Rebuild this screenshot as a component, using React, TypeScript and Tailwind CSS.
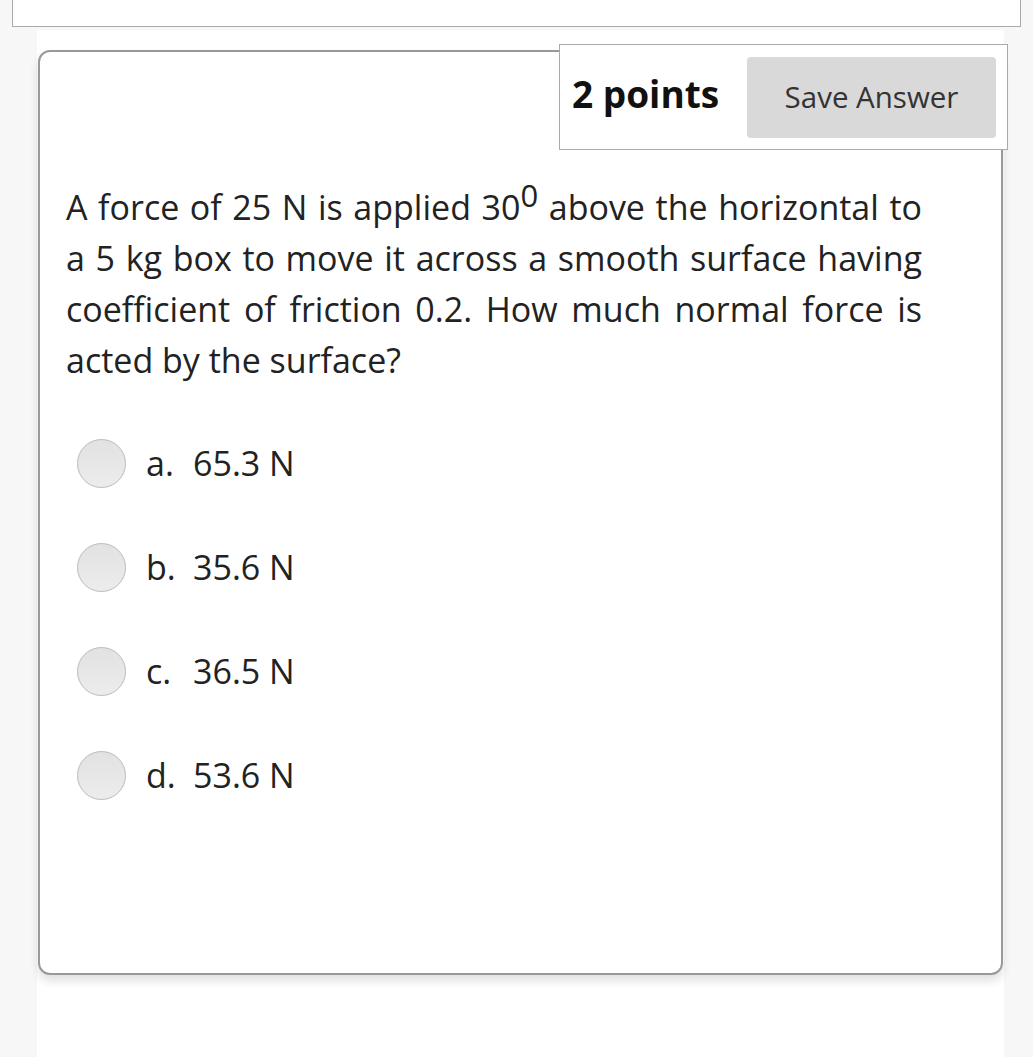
import React from 'react';

const options = [
  { letter: 'a.', text: '65.3 N' },
  { letter: 'b.', text: '35.6 N' },
  { letter: 'c.', text: '36.5 N' },
  { letter: 'd.', text: '53.6 N' },
];

export default function App() {
  return (
    <div className="min-h-[1057px] h-[1057px] overflow-hidden bg-[#f7f7f7] font-['Open_Sans',sans-serif] text-[#222]">
      {/* leftover of the previous question */}
      <div className="mx-[12px] h-[27px] bg-white border border-t-0 border-[#aaa]" />

      <div className="ml-[37px] w-[967px] h-[1030px] mt-[3px] bg-white pt-[20px]">
        <div className="mx-[1px] h-[925px] bg-white border-2 border-[#999] rounded-[12px] shadow-[0_6px_10px_rgba(0,0,0,0.12)]">
          <div className="flex justify-end -mt-[8px] -mr-[7px]">
            <div className="w-[449px] h-[106px] bg-white border border-[#aaa] flex items-center justify-between pl-[12px] pr-[11px]">
              <span className="text-[37px] font-bold text-[#111] leading-none -mt-[7px]">2 points</span>
              <button className="w-[249px] h-[81px] bg-[#d9d9d9] rounded-[4px] text-[29.5px] text-[#333]">
                Save Answer
              </button>
            </div>
          </div>

          <p className="ml-[26px] mt-[32px] w-[856px] text-[34px] leading-[51px] text-justify">
            A force of 25 N is applied 30<span className="text-[31px] relative -top-[13px] leading-none">0</span> above the horizontal to a 5 kg box to move it across a smooth surface having coefficient of friction 0.2. How much normal force is acted by the surface?
          </p>

          <div className="mt-[53px] ml-[37px] flex flex-col gap-[55px]">
            {options.map((o) => (
              <label key={o.letter} className="flex items-center h-[49px]">
                <span className="w-[49px] h-[49px] rounded-full border border-[#bbb] bg-gradient-to-b from-[#e2e2e2] to-[#ececec] shrink-0" />
                <span className="ml-[20px] text-[34px] w-[47px]">{o.letter}</span>
                <span className="text-[34px]">{o.text}</span>
              </label>
            ))}
          </div>
        </div>
      </div>
    </div>
  );
}
